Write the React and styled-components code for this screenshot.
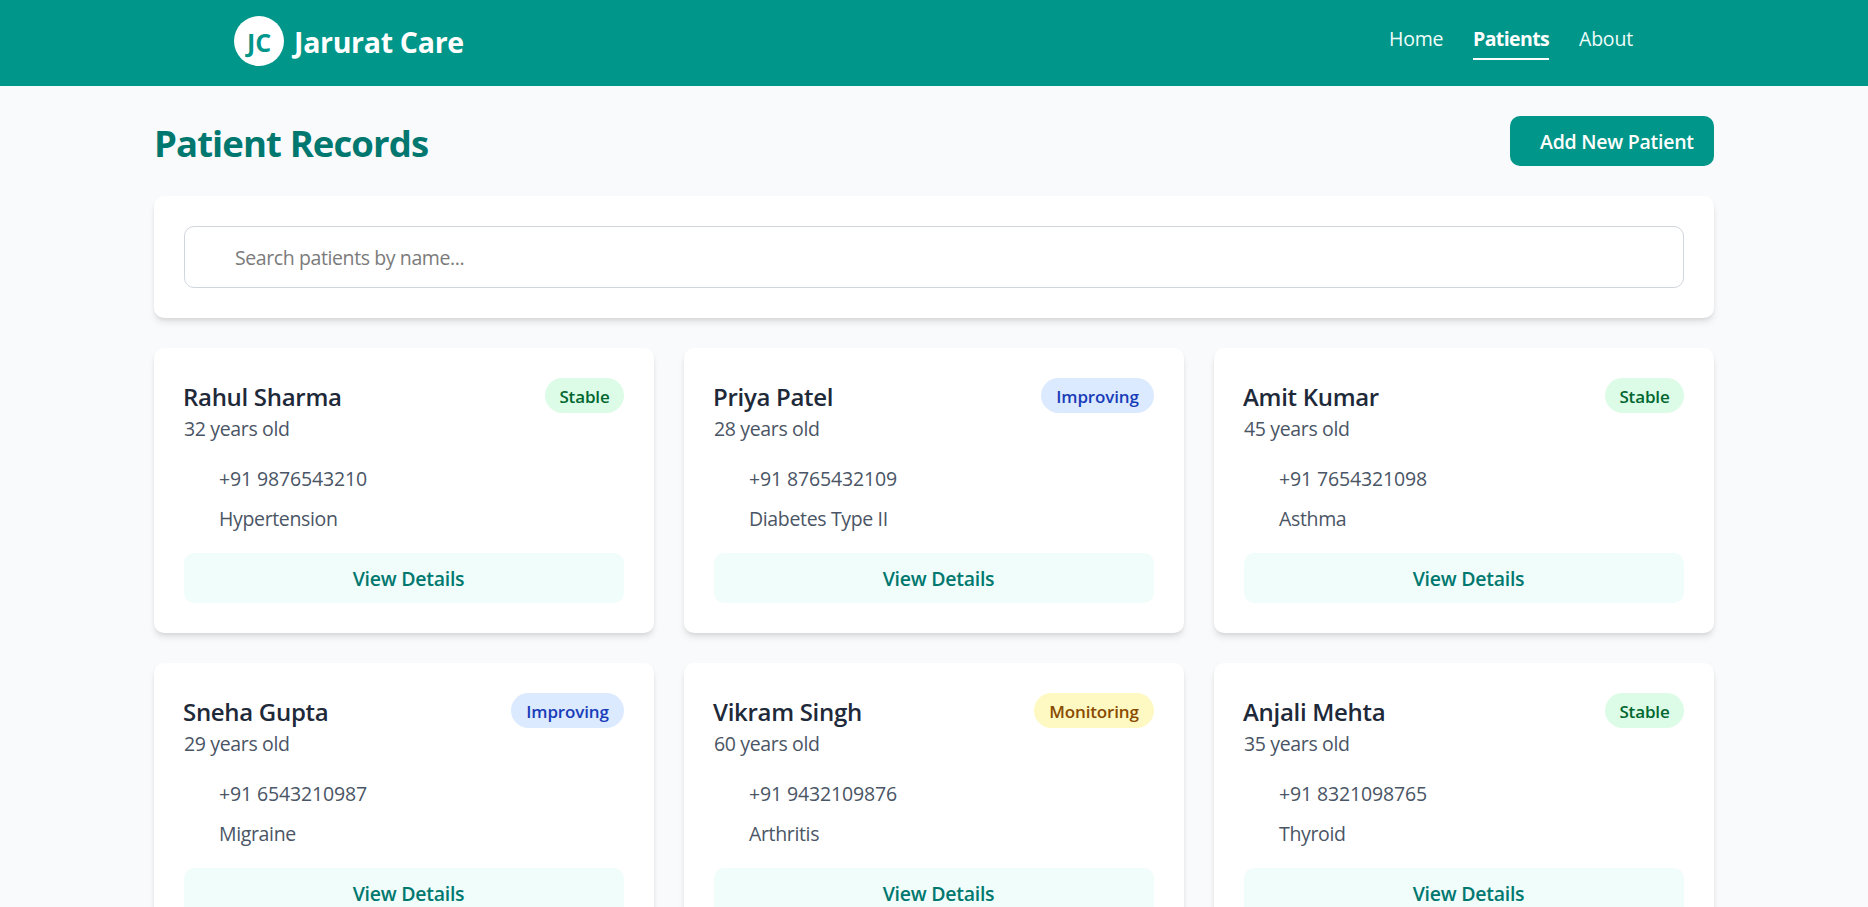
import React from "react";
import styled, { createGlobalStyle } from "styled-components";

const GlobalStyle = createGlobalStyle`
  *, *::before, *::after { box-sizing: border-box; }
  html, body { margin: 0; padding: 0; }
  body {
    height: 907px;
    overflow: hidden;
    background: #f9fafb;
    font-family: "Open Sans", "Noto Sans", sans-serif;
    font-size: 19.5px;
    line-height: 30px;
    color: #4a5565;
  }
  h1, h2, p { margin: 0; }
  button, input { font: inherit; }
`;

const Header = styled.header`
  height: 86px;
  background: #009689;
  color: #ffffff;
`;

const HeaderInner = styled.div`
  width: 1400px;
  height: 100%;
  margin: 0 auto;
  display: flex;
  justify-content: space-between;
  align-items: flex-start;
`;

const Brand = styled.div`
  display: flex;
  align-items: center;
  gap: 10px;
  padding-top: 16px;
`;

const Logo = styled.span`
  width: 50px;
  height: 50px;
  border-radius: 50%;
  background: #ffffff;
  color: #009689;
  display: flex;
  align-items: center;
  justify-content: center;
  padding-top: 1px;
  font-size: 25px;
  font-weight: 700;
  letter-spacing: 0;
`;

const BrandName = styled.span`
  padding-top: 2px;
  font-size: 28.5px;
  font-weight: 700;
  letter-spacing: -0.3px;
  white-space: nowrap;
`;

const Nav = styled.nav`
  display: flex;
  gap: 30px;
  padding-top: 24px;
`;

const NavLink = styled.a`
  width: ${(p) => p.$width}px;
  height: 36px;
  line-height: 30px;
  white-space: nowrap;
  color: ${(p) => (p.$active ? "#ffffff" : "#f0fdfa")};
  font-weight: ${(p) => (p.$active ? 700 : 400)};
  letter-spacing: ${(p) => (p.$active ? "-0.6px" : "-0.2px")};
  border-bottom: ${(p) => (p.$active ? "2px solid #ffffff" : "none")};
`;

const Main = styled.main`
  width: 1560px;
  margin: 0 auto;
  padding-top: 30px;
  display: flex;
  flex-direction: column;
  gap: 30px;
`;

const TitleRow = styled.div`
  height: 50px;
  display: flex;
  justify-content: space-between;
  align-items: center;
`;

const Title = styled.h1`
  padding-top: 4px;
  font-size: 36.5px;
  line-height: 45px;
  font-weight: 700;
  letter-spacing: -0.9px;
  color: #00786f;
`;

const AddButton = styled.button`
  width: 204px;
  height: 50px;
  padding: 1px 0 0 30px;
  border: 0;
  border-radius: 10px;
  background: #009689;
  color: #ffffff;
  font-weight: 600;
  letter-spacing: -0.25px;
  text-align: left;
  white-space: nowrap;
`;

const Panel = styled.section`
  background: #ffffff;
  border-radius: 10px;
  padding: 30px;
  box-shadow: 0 5px 7.5px -1.25px rgba(0, 0, 0, 0.1), 0 2.5px 5px -2.5px rgba(0, 0, 0, 0.1);
`;

const SearchInput = styled.input`
  display: block;
  width: 100%;
  height: 62px;
  padding: 1px 20px 0 50px;
  border: 1px solid #d1d5dc;
  border-radius: 10px;
  background: #ffffff;
  letter-spacing: -0.4px;
  outline: none;
  &::placeholder { color: #7b7b7b; opacity: 1; }
`;

const CardGrid = styled.div`
  display: grid;
  grid-template-columns: repeat(3, 1fr);
  gap: 30px;
`;

const CardTop = styled.div`
  display: flex;
  justify-content: space-between;
  align-items: flex-start;
  margin-bottom: 20px;
`;

const Name = styled.h2`
  height: 35px;
  line-height: 37px;
  margin-left: -1px;
  font-size: 24px;
  font-weight: 600;
  letter-spacing: -0.3px;
  color: #1e2939;
`;

const Line = styled.p`
  height: 30px;
  line-height: 32px;
  letter-spacing: ${(p) => (p.$numeric ? "-0.15px" : "-0.35px")};
  white-space: nowrap;
`;

const Details = styled.div`
  display: flex;
  flex-direction: column;
  gap: 10px;
  padding-left: 35px;
  margin-bottom: 20px;
`;

const tones = {
  Stable: { width: 79, background: "#dcfce7", color: "#016630" },
  Improving: { width: 113, background: "#dbeafe", color: "#193cb8" },
  Monitoring: { width: 120, background: "#fef9c2", color: "#894b00" },
};

const Badge = styled.span`
  width: ${(p) => tones[p.$tone].width}px;
  height: 35px;
  line-height: 37px;
  border-radius: 18px;
  background: ${(p) => tones[p.$tone].background};
  color: ${(p) => tones[p.$tone].color};
  font-size: 17px;
  font-weight: 600;
  letter-spacing: -0.15px;
  text-align: center;
  white-space: nowrap;
`;

const DetailsButton = styled.button`
  display: block;
  width: 100%;
  height: 50px;
  padding: 2px 0 0 9px;
  border: 0;
  border-radius: 10px;
  background: #f0fdfa;
  color: #00786f;
  font-weight: 600;
  letter-spacing: -0.25px;
`;

const patients = [
  { name: "Rahul Sharma", age: 32, phone: "+91 9876543210", condition: "Hypertension", status: "Stable" },
  { name: "Priya Patel", age: 28, phone: "+91 8765432109", condition: "Diabetes Type II", status: "Improving" },
  { name: "Amit Kumar", age: 45, phone: "+91 7654321098", condition: "Asthma", status: "Stable" },
  { name: "Sneha Gupta", age: 29, phone: "+91 6543210987", condition: "Migraine", status: "Improving" },
  { name: "Vikram Singh", age: 60, phone: "+91 9432109876", condition: "Arthritis", status: "Monitoring" },
  { name: "Anjali Mehta", age: 35, phone: "+91 8321098765", condition: "Thyroid", status: "Stable" },
];

function PatientCard({ patient }) {
  return (
    <Panel>
      <CardTop>
        <div>
          <Name>{patient.name}</Name>
          <Line>{patient.age} years old</Line>
        </div>
        <Badge $tone={patient.status}>{patient.status}</Badge>
      </CardTop>
      <Details>
        <Line $numeric>{patient.phone}</Line>
        <Line>{patient.condition}</Line>
      </Details>
      <DetailsButton>View Details</DetailsButton>
    </Panel>
  );
}

export default function App() {
  return (
    <>
      <GlobalStyle />
      <Header>
        <HeaderInner>
          <Brand>
            <Logo>JC</Logo>
            <BrandName>Jarurat Care</BrandName>
          </Brand>
          <Nav>
            <NavLink $width={54}>Home</NavLink>
            <NavLink $width={76} $active>Patients</NavLink>
            <NavLink $width={55}>About</NavLink>
          </Nav>
        </HeaderInner>
      </Header>
      <Main>
        <TitleRow>
          <Title>Patient Records</Title>
          <AddButton>Add New Patient</AddButton>
        </TitleRow>
        <Panel>
          <SearchInput placeholder="Search patients by name..." />
        </Panel>
        <CardGrid>
          {patients.map((patient) => (
            <PatientCard key={patient.name} patient={patient} />
          ))}
        </CardGrid>
      </Main>
    </>
  );
}
